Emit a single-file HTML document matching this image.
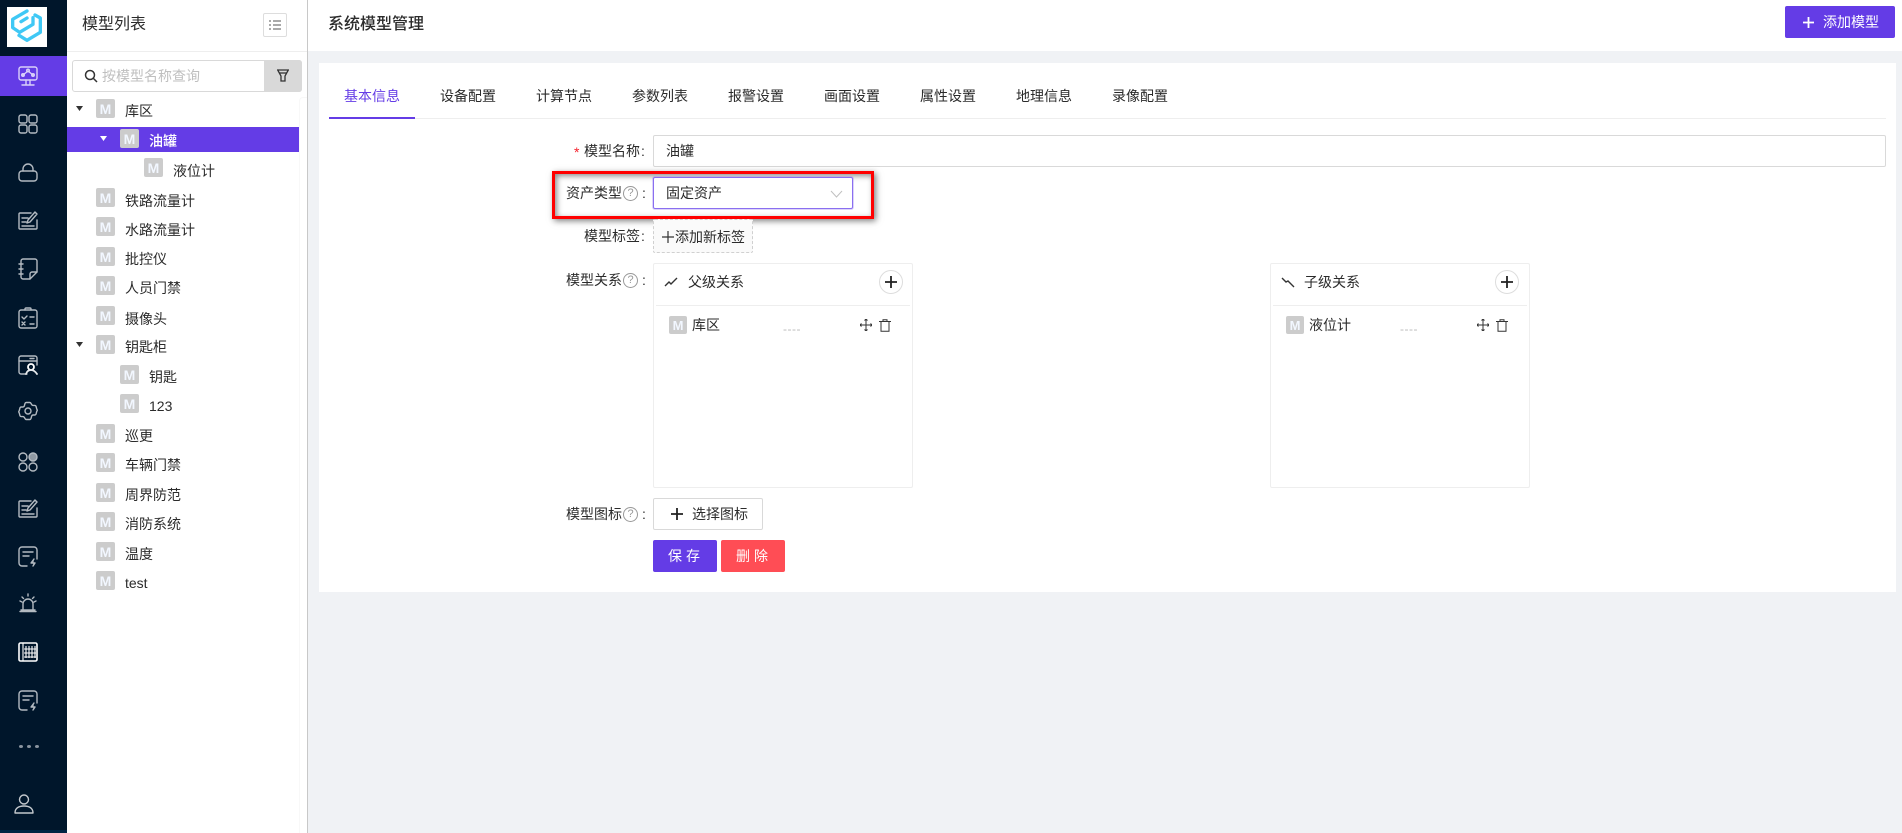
<!DOCTYPE html>
<html lang="zh"><head><meta charset="utf-8"><title>系统模型管理</title>
<style>
html,body{margin:0;padding:0;width:1902px;height:833px;overflow:hidden;background:#f0f2f5;font-family:"Liberation Sans","Noto Sans CJK SC",sans-serif;font-size:14px;color:#2b2b2b}
div,span,svg{position:absolute;box-sizing:border-box}
.t{line-height:20px;height:20px;white-space:nowrap}
.m{width:19px;height:19px;background:#ccc;border-radius:2px;color:#f2f7ff;font-size:14px;font-weight:bold;line-height:20px;text-align:center}
.m.s{width:18px;height:18px;line-height:19px;font-size:13px}
.i{left:18px;width:20px;height:20px;fill:none;stroke:#b3bac1;stroke-width:1.4;stroke-linecap:round;stroke-linejoin:round}
.tab{top:86px;line-height:20px;white-space:nowrap;color:#2b2b2b}
.lab{line-height:20px;height:20px;white-space:nowrap;color:#2b2b2b}
.q{width:15px;height:15px;border:1px solid #999;border-radius:50%;color:#999;font-size:11px;line-height:13px;text-align:center}
</style></head><body>

<!-- left nav -->
<div style="left:0;top:0;width:67px;height:833px;background:#00162b"></div>
<div style="left:0;top:830px;width:67px;height:3px;background:#002544"></div>
<div style="left:7px;top:7px;width:40px;height:40px;background:#fff"></div>
<svg style="left:7px;top:7px;width:40px;height:40px;fill:none;stroke:#3fc8f5;stroke-width:10;stroke-linejoin:round;stroke-linecap:round" viewBox="0 0 120 120"><path d="M60 12L17 37V62L38 76L78 52V32"/><path d="M84 24L100 33V76L60 100L36 85"/><path d="M42 44L60 33"/></svg>
<div style="left:0;top:56px;width:67px;height:40px;background:#643ce6"></div>

<svg class="i" style="top:66px;stroke:#d9d0fa" viewBox="0 0 20 20"><rect x="1" y="1" width="18" height="13" rx="2"/><path d="M5 9L10 5L15 9M7 19h7M8 14v5M12 14v5M4 19h12"/><circle cx="5" cy="9" r="1.300"/><circle cx="10" cy="4.500" r="1.300"/><circle cx="15" cy="9" r="1.300"/></svg>
<svg class="i" style="top:114px" viewBox="0 0 20 20"><rect x="1" y="1" width="8" height="8" rx="2"/><rect x="11" y="1" width="8" height="8" rx="2"/><rect x="1" y="11" width="8" height="8" rx="2"/><rect x="11" y="11" width="8" height="8" rx="2"/></svg>
<svg class="i" style="top:162px" viewBox="0 0 20 20"><rect x="1" y="9" width="18" height="10" rx="3"/><path d="M5 9V7a5 5 0 0 1 10 0v2"/></svg>
<svg class="i" style="top:210px" viewBox="0 0 20 20"><path d="M19 10v8a1 1 0 0 1-1 1H2a1 1 0 0 1-1-1V4a1 1 0 0 1 1-1h11"/><path d="M4 8h6M4 12h4M4 16h12M9 13l1-3 7-8 2 2-7 8z"/></svg>
<svg class="i" style="top:258px;height:22px" viewBox="0 0 20 22"><path d="M3 3a2 2 0 0 1 2-2h12a2 2 0 0 1 2 2v11l-7 7H5a2 2 0 0 1-2-2z"/><path d="M1 6h4M1 11h4M1 16h4M12 21v-5a2 2 0 0 1 2-2h5"/></svg>
<svg class="i" style="top:307px;height:22px" viewBox="0 0 20 22"><rect x="1" y="3" width="18" height="18" rx="2"/><path d="M7 3V2a1 1 0 0 1 1-1h4a1 1 0 0 1 1 1v1"/><path d="M4 10l2 2 3-3M12 10h4M4 15l3 3M7 15l-3 3M12 17h4"/></svg>
<svg class="i" style="top:355px" viewBox="0 0 20 20"><path d="M9 19H3a2 2 0 0 1-2-2V3a2 2 0 0 1 2-2h14a2 2 0 0 1 2 2v7"/><path d="M1 6h18M12 3.500h4"/><circle cx="13" cy="12" r="3" stroke-width="1.800" stroke="#fff"/><path d="M8 19c1-3 3-4 5-4s4 1 6 4" stroke-width="1.800" stroke="#e6e9ec"/></svg>
<svg class="i" style="top:401px" viewBox="0 0 20 20"><path d="M7 2.500a1.500 1.500 0 0 1 1.300-1h3.400a1.500 1.500 0 0 1 1.300 1l.8 1.200a1.500 1.500 0 0 0 1.400.7h1.400a1.500 1.500 0 0 1 1.400.8l.8 3a1.500 1.500 0 0 1 0 2l-.8 3a1.500 1.500 0 0 1-1.400.8h-1.400a1.500 1.500 0 0 0-1.400.7L13 17.500a1.500 1.500 0 0 1-1.300 1H8.300a1.500 1.500 0 0 1-1.300-1l-.8-1.200a1.500 1.500 0 0 0-1.400-.7H3.400a1.500 1.500 0 0 1-1.400-.8l-.8-3a1.500 1.500 0 0 1 0-2l.8-3a1.500 1.500 0 0 1 1.400-.8h1.400a1.500 1.500 0 0 0 1.400-.7z"/><circle cx="10" cy="10" r="3"/></svg>
<svg class="i" style="top:452px" viewBox="0 0 20 20"><circle cx="5" cy="5" r="4"/><circle cx="15" cy="5" r="4" fill="#8f99a3"/><circle cx="5" cy="15" r="4"/><circle cx="15" cy="15" r="4"/></svg>
<svg class="i" style="top:498px" viewBox="0 0 20 20"><path d="M19 10v8a1 1 0 0 1-1 1H2a1 1 0 0 1-1-1V4a1 1 0 0 1 1-1h11"/><path d="M4 8h6M4 12h4M4 16h12M9 13l1-3 7-8 2 2-7 8z"/></svg>
<svg class="i" style="top:546px;height:21px" viewBox="0 0 20 21"><path d="M9 20H4a3 3 0 0 1-3-3V4a3 3 0 0 1 3-3h12a3 3 0 0 1 3 3v9"/><path d="M5 6h10M5 10h6"/><path d="M16 13l-3 4h4l-2 3" fill="#b3bac1"/></svg>
<svg class="i" style="top:593px" viewBox="0 0 20 20"><path d="M5 16v-5a5 5 0 0 1 10 0v5M2 18.500h16M3 17h14M10 1v2M2 8l2 1M18 8l-2 1M4 4l1.500 1.500M16 4l-1.500 1.500"/></svg>
<svg class="i" style="top:642px;stroke:#fff" viewBox="0 0 20 20"><rect x="1" y="1" width="18" height="18" rx="1.500" stroke-width="1.600"/><path d="M5 1v18M8 4v12M11 4v12M14 4v12M17 4v12M6 7h12M6 11h12M6 15h12" stroke-width="1.100" stroke-linecap="butt"/></svg>
<svg class="i" style="top:690px;height:21px" viewBox="0 0 20 21"><path d="M9 20H4a3 3 0 0 1-3-3V4a3 3 0 0 1 3-3h12a3 3 0 0 1 3 3v9"/><path d="M5 6h10M5 10h6"/><path d="M16 13l-3 4h4l-2 3" fill="#b3bac1"/></svg>
<div style="left:19px;top:745px;width:4px;height:3px;background:#8a94a0;border-radius:50%"></div>
<div style="left:27px;top:745px;width:4px;height:3px;background:#8a94a0;border-radius:50%"></div>
<div style="left:35px;top:745px;width:4px;height:3px;background:#8a94a0;border-radius:50%"></div>
<svg class="i" style="left:14px;top:794px;stroke:#c3c8cd" viewBox="0 0 20 20"><circle cx="10" cy="5.500" r="4.500"/><path d="M1 19c0-5 4-7 9-7s9 2 9 7z"/></svg>

<!-- tree panel -->
<div style="left:67px;top:0;width:241px;height:833px;background:#fff;border-right:1px solid #c8c8c8"></div>
<div style="left:67px;top:51px;width:240px;height:1px;background:#eee"></div>
<div style="left:299px;top:97px;width:8px;height:736px;border-left:1px solid #f8f8f8;border-top:1px solid #f8f8f8;border-top-left-radius:4px"></div>
<div class="t" style="left:82px;top:15px;font-size:16px">模型列表</div>
<div style="left:263px;top:13px;width:24px;height:24px;border:1px solid #ddd;border-radius:2px"></div>
<svg style="left:269px;top:19px;width:12px;height:12px;stroke:#777;stroke-width:1.300" viewBox="0 0 12 12"><path d="M0 2h2M4 2h8M0 6h2M4 6h8M0 10h2M4 10h8"/></svg>

<div style="left:72px;top:60px;width:230px;height:32px;border:1px solid #d9d9d9;border-radius:3px"></div>
<div style="left:264px;top:60px;width:38px;height:32px;background:#d9d9d9;border-radius:0 3px 3px 0"></div>
<svg style="left:84px;top:69px;width:14px;height:14px;fill:none;stroke:#333;stroke-width:1.500" viewBox="0 0 14 14"><circle cx="6" cy="6" r="4.500"/><path d="M9.500 9.500L13 13"/></svg>
<div class="t" style="left:102px;top:66px;color:#bfbfbf">按模型名称查询</div>
<svg style="left:277px;top:69px;width:12px;height:13px;fill:none;stroke:#333;stroke-width:1.300" viewBox="0 0 12 13"><path d="M.7 1h10.600L8 7v5H4V7z"/><path d="M2.500 4h7"/></svg>

<div style="left:67px;top:127px;width:232px;height:25px;background:#643ce6"></div>
<svg style="left:76px;top:106px;width:7px;height:5px" viewBox="0 0 7 5"><path d="M0 0h7L3.500 5z" fill="#333"/></svg>
<svg style="left:100px;top:136px;width:7px;height:5px" viewBox="0 0 7 5"><path d="M0 0h7L3.500 5z" fill="#fff"/></svg>
<svg style="left:76px;top:342px;width:7px;height:5px" viewBox="0 0 7 5"><path d="M0 0h7L3.500 5z" fill="#333"/></svg>

<div class="m" style="left:96px;top:99px">M</div><div class="t" style="left:125px;top:101px">库区</div>
<div class="m" style="left:120px;top:129px">M</div><div class="t" style="left:149px;top:131px;color:#fff;font-weight:500">油罐</div>
<div class="m" style="left:144px;top:158px">M</div><div class="t" style="left:173px;top:161px">液位计</div>
<div class="m" style="left:96px;top:188px">M</div><div class="t" style="left:125px;top:191px">铁路流量计</div>
<div class="m" style="left:96px;top:217px">M</div><div class="t" style="left:125px;top:220px">水路流量计</div>
<div class="m" style="left:96px;top:247px">M</div><div class="t" style="left:125px;top:249px">批控仪</div>
<div class="m" style="left:96px;top:276px">M</div><div class="t" style="left:125px;top:278px">人员门禁</div>
<div class="m" style="left:96px;top:306px">M</div><div class="t" style="left:125px;top:309px">摄像头</div>
<div class="m" style="left:96px;top:335px">M</div><div class="t" style="left:125px;top:337px">钥匙柜</div>
<div class="m" style="left:120px;top:365px">M</div><div class="t" style="left:149px;top:367px">钥匙</div>
<div class="m" style="left:120px;top:394px">M</div><div class="t" style="left:149px;top:396px">123</div>
<div class="m" style="left:96px;top:424px">M</div><div class="t" style="left:125px;top:426px">巡更</div>
<div class="m" style="left:96px;top:453px">M</div><div class="t" style="left:125px;top:455px">车辆门禁</div>
<div class="m" style="left:96px;top:483px">M</div><div class="t" style="left:125px;top:485px">周界防范</div>
<div class="m" style="left:96px;top:512px">M</div><div class="t" style="left:125px;top:514px">消防系统</div>
<div class="m" style="left:96px;top:542px">M</div><div class="t" style="left:125px;top:544px">温度</div>
<div class="m" style="left:96px;top:571px">M</div><div class="t" style="left:125px;top:573px">test</div>

<!-- top bar -->
<div style="left:308px;top:0;width:1594px;height:51px;background:#fff"></div>
<div class="t" style="left:328px;top:15px;font-size:16px;font-weight:500">系统模型管理</div>
<div style="left:1785px;top:6px;width:110px;height:32px;background:#643ce6;border-radius:2px"></div>
<svg style="left:1803px;top:17px;width:11px;height:11px;stroke:#fff;stroke-width:1.800" viewBox="0 0 11 11"><path d="M0 5.500h11M5.500 0v11"/></svg>
<div class="t" style="left:1823px;top:12px;color:#fff">添加模型</div>

<!-- card -->
<div style="left:319px;top:63px;width:1577px;height:529px;background:#fff"></div>
<div style="left:329px;top:118px;width:1557px;height:1px;background:#eee"></div>
<div style="left:329px;top:117px;width:86px;height:2px;background:#643ce6"></div>
<div class="tab" style="left:344px;color:#643ce6">基本信息</div>
<div class="tab" style="left:440px">设备配置</div>
<div class="tab" style="left:536px">计算节点</div>
<div class="tab" style="left:632px">参数列表</div>
<div class="tab" style="left:728px">报警设置</div>
<div class="tab" style="left:824px">画面设置</div>
<div class="tab" style="left:920px">属性设置</div>
<div class="tab" style="left:1016px">地理信息</div>
<div class="tab" style="left:1112px">录像配置</div>

<!-- name -->
<div class="lab" style="left:574px;top:142px;color:#f5222d">*</div>
<div class="lab" style="left:584px;top:141px">模型名称<span style="position:static;margin-left:1px">:</span></div>
<div style="left:653px;top:135px;width:1233px;height:32px;border:1px solid #d9d9d9;border-radius:2px"></div>
<div class="t" style="left:666px;top:141px">油罐</div>

<!-- red highlight -->
<div style="left:552px;top:171px;width:322px;height:48px;border:3px solid #f00;box-shadow:2px 2px 6px rgba(0,0,0,.5),inset 2px 2px 6px rgba(0,0,0,.45)"></div>
<div class="lab" style="left:566px;top:183px">资产类型</div>
<div class="q" style="left:623px;top:186px">?</div>
<div class="lab" style="left:642px;top:183px">:</div>
<div style="left:653px;top:177px;width:200px;height:32px;background:#fff;border:1px solid #8a6ff0;border-radius:2px;box-shadow:0 0 0 1px rgba(138,111,240,.3)"></div>
<div class="t" style="left:666px;top:183px">固定资产</div>
<svg style="left:830px;top:190px;width:13px;height:8px;fill:none;stroke:#c0c0c0;stroke-width:1" viewBox="0 0 13 8"><path d="M1 1l5.500 6L12 1"/></svg>

<!-- tag -->
<div class="lab" style="left:584px;top:226px">模型标签<span style="position:static;margin-left:1px">:</span></div>
<div style="left:653px;top:219px;width:100px;height:34px;background:#fafafa;border:1px dashed #d0d0d0;border-radius:2px"></div>
<svg style="left:662px;top:231px;width:12px;height:12px;stroke:#333;stroke-width:1.200" viewBox="0 0 12 12"><path d="M0 6h12M6 0v12"/></svg>
<div class="t" style="left:675px;top:227px">添加新标签</div>

<!-- relations -->
<div class="lab" style="left:566px;top:270px">模型关系</div>
<div class="q" style="left:623px;top:273px">?</div>
<div class="lab" style="left:642px;top:270px">:</div>

<div style="left:653px;top:263px;width:260px;height:225px;border:1px solid #eee;border-radius:2px"></div>
<div style="left:656px;top:305px;width:254px;height:1px;background:#eee"></div>
<svg style="left:664px;top:276px;width:14px;height:12px;fill:none;stroke:#333;stroke-width:1.400" viewBox="0 0 14 12"><path d="M1 10l4-4 2 2 6-6"/></svg>
<div class="t" style="left:688px;top:272px">父级关系</div>
<div style="left:879px;top:270px;width:24px;height:24px;border:1px solid #ddd;border-radius:50%"></div>
<svg style="left:885px;top:276px;width:12px;height:12px;stroke:#222;stroke-width:1.800" viewBox="0 0 12 12"><path d="M0 6h12M6 0v12"/></svg>
<div class="m s" style="left:669px;top:316px">M</div>
<div class="t" style="left:692px;top:315px">库区</div>
<div class="t" style="left:783px;top:319px;font-size:12px;letter-spacing:.5px;color:#bbb">----</div>
<svg style="left:860px;top:319px;width:12px;height:12px;fill:none;stroke:#333;stroke-width:1" viewBox="0 0 12 12"><path d="M0 6h12M6 0v12M1.500 4.500L0 6l1.500 1.500M10.500 4.500L12 6l-1.500 1.500M4.500 1.500L6 0l1.500 1.500M4.500 10.500L6 12l1.500-1.500"/></svg>
<svg style="left:879px;top:319px;width:12px;height:13px;fill:none;stroke:#333;stroke-width:1" viewBox="0 0 12 13"><path d="M0 2.500h12M4 2.500V.7h4v1.800M2 2.500v9.800h8V2.500"/></svg>

<div style="left:1270px;top:263px;width:260px;height:225px;border:1px solid #eee;border-radius:2px"></div>
<div style="left:1273px;top:305px;width:254px;height:1px;background:#eee"></div>
<svg style="left:1281px;top:276px;width:14px;height:12px;fill:none;stroke:#333;stroke-width:1.400" viewBox="0 0 14 12"><path d="M1 2l4 4 2-1 6 6"/></svg>
<div class="t" style="left:1304px;top:272px">子级关系</div>
<div style="left:1495px;top:270px;width:24px;height:24px;border:1px solid #ddd;border-radius:50%"></div>
<svg style="left:1501px;top:276px;width:12px;height:12px;stroke:#222;stroke-width:1.800" viewBox="0 0 12 12"><path d="M0 6h12M6 0v12"/></svg>
<div class="m s" style="left:1286px;top:316px">M</div>
<div class="t" style="left:1309px;top:315px">液位计</div>
<div class="t" style="left:1400px;top:319px;font-size:12px;letter-spacing:.5px;color:#bbb">----</div>
<svg style="left:1477px;top:319px;width:12px;height:12px;fill:none;stroke:#333;stroke-width:1" viewBox="0 0 12 12"><path d="M0 6h12M6 0v12M1.500 4.500L0 6l1.500 1.500M10.500 4.500L12 6l-1.500 1.500M4.500 1.500L6 0l1.500 1.500M4.500 10.500L6 12l1.500-1.500"/></svg>
<svg style="left:1496px;top:319px;width:12px;height:13px;fill:none;stroke:#333;stroke-width:1" viewBox="0 0 12 13"><path d="M0 2.500h12M4 2.500V.7h4v1.800M2 2.500v9.800h8V2.500"/></svg>

<!-- icon -->
<div class="lab" style="left:566px;top:504px">模型图标</div>
<div class="q" style="left:623px;top:507px">?</div>
<div class="lab" style="left:642px;top:504px">:</div>
<div style="left:653px;top:498px;width:110px;height:32px;border:1px solid #d9d9d9;border-radius:2px"></div>
<svg style="left:671px;top:508px;width:12px;height:12px;stroke:#222;stroke-width:1.800" viewBox="0 0 12 12"><path d="M0 6h12M6 0v12"/></svg>
<div class="t" style="left:692px;top:504px">选择图标</div>

<div style="left:653px;top:540px;width:64px;height:32px;background:#643ce6;border-radius:2px;color:#fff;line-height:32px;text-align:center;letter-spacing:4px;padding-left:2px">保存</div>
<div style="left:721px;top:540px;width:64px;height:32px;background:#ff4d55;border-radius:2px;color:#fff;line-height:32px;text-align:center;letter-spacing:4px;padding-left:2px">删除</div>

</body></html>
